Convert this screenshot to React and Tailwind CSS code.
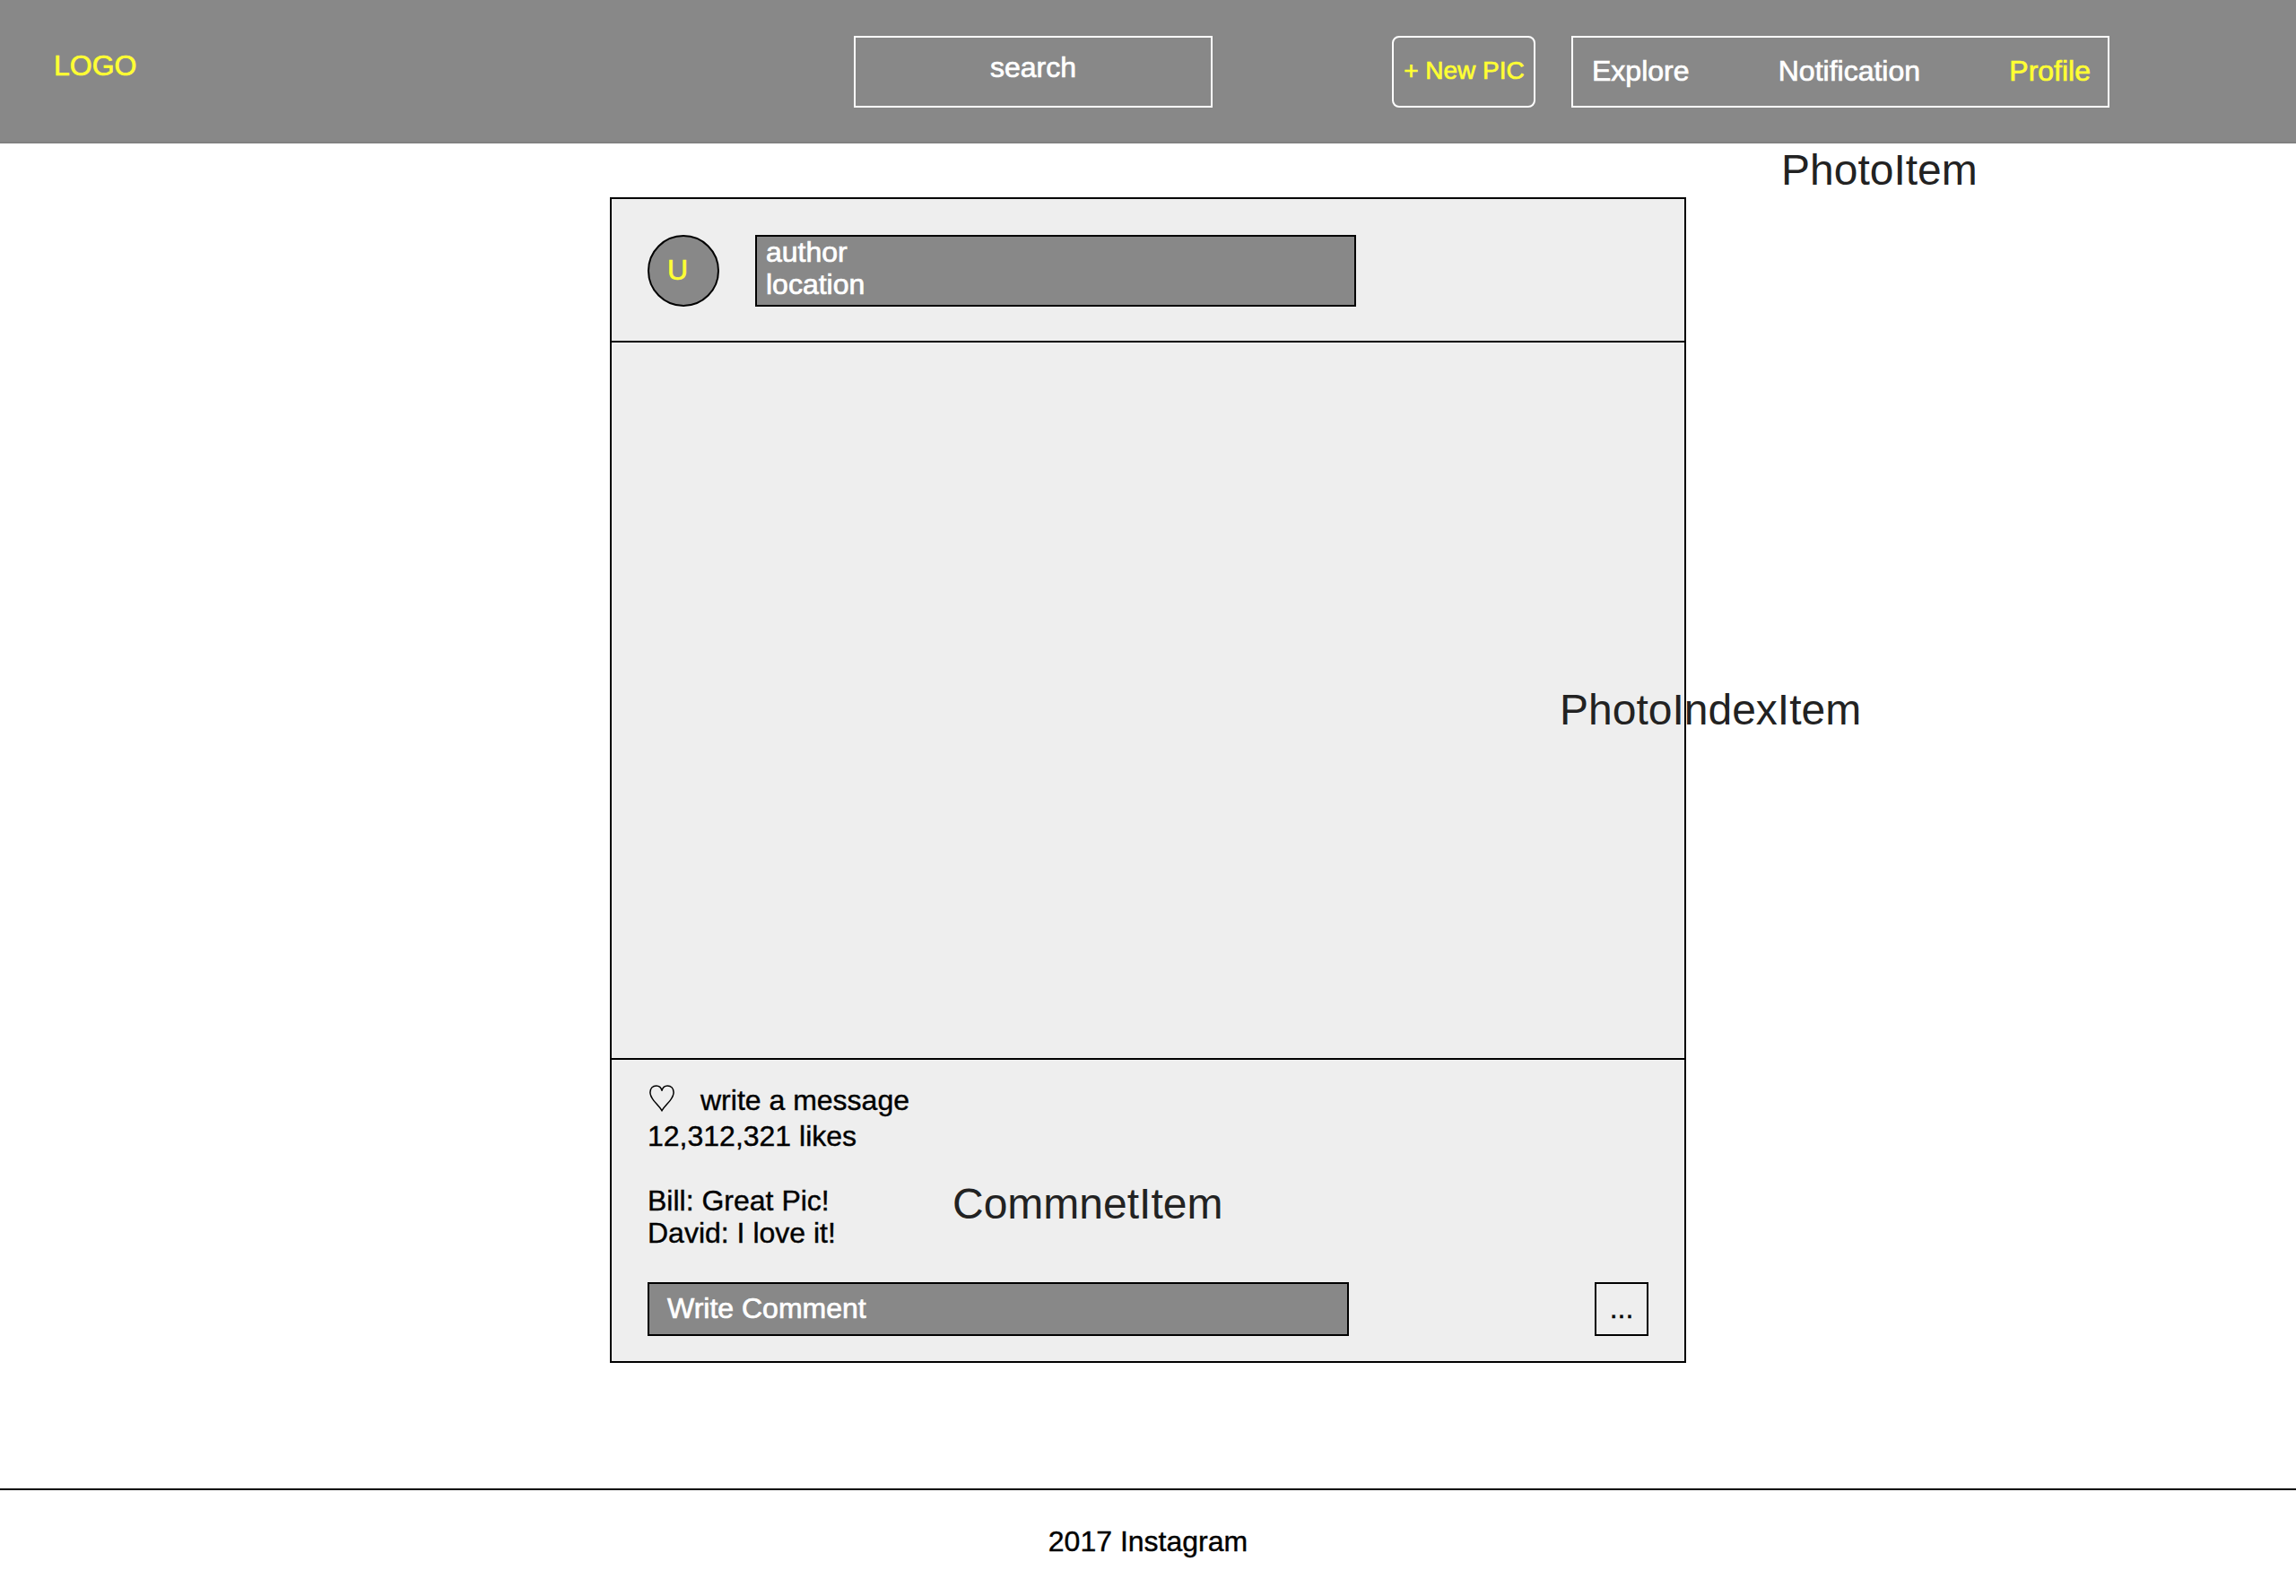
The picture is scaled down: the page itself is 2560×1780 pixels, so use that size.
const NAV_LINKS = [
  { label: 'Explore', className: 'text-white' },
  { label: 'Notification', className: 'text-white' },
  { label: 'Profile', className: 'text-[#ffff33]' },
];

const COMMENTS = [
  { author: 'Bill', text: 'Great Pic!' },
  { author: 'David', text: 'I love it!' },
];

function Header() {
  return (
    <header className="flex h-40 items-start border-b-2 border-[#808080] bg-[#888888] [-webkit-text-stroke:0.7px_currentColor]">
      <div className="w-[952px] pt-[55px] pl-[60px] text-[#ffff33]">LOGO</div>
      <div className="mt-10 h-20 w-[400px] border-2 border-white pt-[15px] text-center text-white">
        search
      </div>
      <button className="mt-10 ml-[200px] flex h-20 w-40 justify-center rounded-lg border-2 border-white pt-[21px] pl-px text-[28px] leading-8 whitespace-nowrap text-[#ffff33]">
        + New PIC
      </button>
      <nav className="mt-10 ml-10 flex h-20 w-[600px] justify-between border-2 border-white pt-[19px] pr-[19px] pl-[21px]">
        {NAV_LINKS.map((link) => (
          <a key={link.label} className={link.className}>
            {link.label}
          </a>
        ))}
      </nav>
    </header>
  );
}

function HeartIcon() {
  return (
    <svg width="28" height="30" viewBox="0 0 28 30" fill="none" stroke="#000" strokeWidth="1.5">
      <path d="M14 6.6C13.2 2.8 10.8 0.9 7.8 0.9C3.7 0.9 0.9 3.8 0.9 8.3C0.9 11.4 2.4 14.3 5 17.6C7.9 21.2 11.6 24.4 14 28.6C16.4 24.4 20.1 21.2 23 17.6C25.6 14.3 27.1 11.4 27.1 8.3C27.1 3.8 24.3 0.9 20.2 0.9C17.2 0.9 14.8 2.8 14 6.6Z" />
    </svg>
  );
}

function PhotoCard() {
  return (
    <article className="mx-auto mt-[60px] flex h-[1300px] w-[1200px] flex-col border-2 border-black bg-[#eeeeee]">
      <div className="flex h-40 gap-10 border-b-2 border-black pt-10 pl-10 [-webkit-text-stroke:0.7px_currentColor]">
        <div className="h-20 w-20 rounded-full border-2 border-black bg-[#888888] pt-[19px] pl-5 text-[#ffff33]">
          U
        </div>
        <div className="h-20 w-[670px] border-2 border-black bg-[#888888] pl-2.5 text-white">
          <div className="-mt-px">author</div>
          <div>location</div>
        </div>
      </div>

      <div className="h-[800px] border-b-2 border-black" />

      <div className="flex flex-1 flex-col px-10 pt-[27px] [-webkit-text-stroke:0.4px_currentColor]">
        <div className="flex h-10 items-start">
          <div className="mt-px ml-0.5">
            <HeartIcon />
          </div>
          <span className="ml-[29px]">write a message</span>
        </div>
        <div>12,312,321 likes</div>
        <div className="mt-9">
          {COMMENTS.map((comment) => (
            <div key={comment.author}>
              {comment.author}: {comment.text}
            </div>
          ))}
        </div>
        <div className="mt-[37px] flex justify-between">
          <div className="h-[60px] w-[782px] border-2 border-black bg-[#888888] pt-[9px] pl-5 text-white [-webkit-text-stroke:0.7px_currentColor]">
            Write Comment
          </div>
          <button className="flex h-[60px] w-[60px] justify-center border-2 border-black pt-[9px]">
            ...
          </button>
        </div>
      </div>
    </article>
  );
}

export default function App() {
  return (
    <div className="relative h-[1780px] w-[2560px] overflow-hidden bg-white font-['Liberation_Sans',Arial,sans-serif] text-[32px] leading-9 text-black">
      <Header />
      <PhotoCard />
      <footer className="mt-[140px] border-t-2 border-black pt-[39px] text-center [-webkit-text-stroke:0.4px_currentColor]">
        2017 Instagram
      </footer>

      {/* Component name annotations */}
      <div className="absolute top-[162px] left-[1986px] text-5xl leading-14 text-[#222222]">PhotoItem</div>
      <div className="absolute top-[764px] left-[1739px] text-5xl leading-14 text-[#222222]">PhotoIndexItem</div>
      <div className="absolute top-[1315px] left-[1062px] text-5xl leading-14 text-[#222222]">CommnetItem</div>
    </div>
  );
}
